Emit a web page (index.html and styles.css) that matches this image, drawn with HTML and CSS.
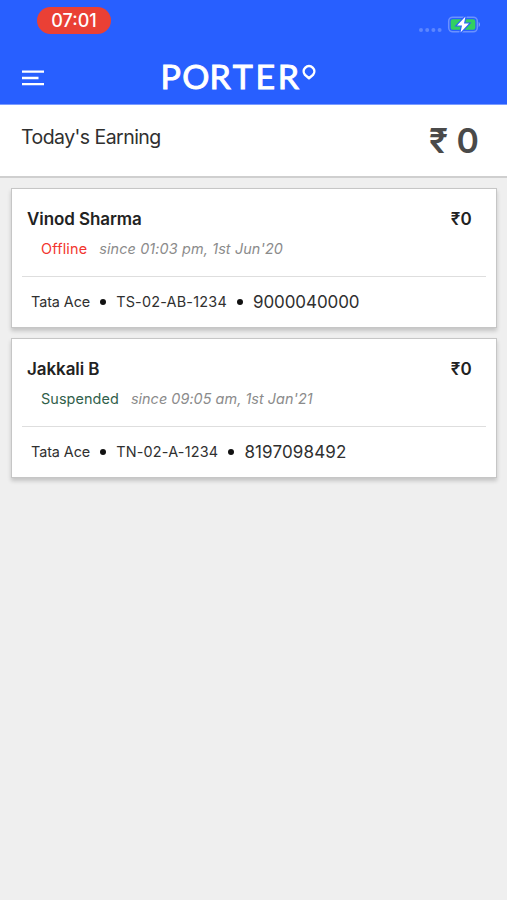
FILE: index.html
```html
<!DOCTYPE html>
<html lang="en">
<head>
<meta charset="utf-8">
<title>Porter</title>
<link rel="stylesheet" href="styles.css">
</head>
<body>
<header class="header">
  <div class="status-bar">
    <span class="clock">07:01</span>
    <svg class="device-status" width="64" height="20" viewBox="0 0 64 20">
      <g fill="#5c86ff">
        <circle cx="3" cy="14" r="2"/><circle cx="9.200" cy="14" r="2"/><circle cx="15.400" cy="14" r="2"/><circle cx="21.600" cy="14" r="2"/>
      </g>
      <rect x="30.700" y="1.200" width="28.600" height="14.600" rx="4" fill="none" stroke="#6b91ff" stroke-width="1.500"/>
      <path d="M60.700 6c1.700.8 1.700 4.200 0 5z" fill="#7d9eff"/>
      <rect x="32.700" y="3.200" width="24.600" height="10.600" rx="2" fill="#32cf62"/>
      <path d="M47.500 .5L39 9.500h5l-1.500 7L51 7.500h-5z" fill="#fff" stroke="#285fff" stroke-width="2.200" paint-order="stroke"/>
    </svg>
  </div>
  <nav class="toolbar">
    <svg class="menu" width="22" height="17" viewBox="0 0 22 17">
      <path d="M0 1.700h22M0 8h16.500M0 14.200h22" stroke="#fff" stroke-width="2.300"/>
    </svg>
    <svg class="brand" width="156" height="30" viewBox="0 0 156 30">
      <text class="wordmark" transform="scale(1.06 1)" x="-1.500 19.100 44.900 66.700 88.300 109.300" y="26.100">PORTER</text>
      <path d="M147 15.300L143 11.900A5.300 5.300 0 1 1 151 11.900Z" fill="none" stroke="#fff" stroke-width="2.500" stroke-linejoin="round"/>
    </svg>
  </nav>
</header>
<section class="earning">
  <h1 class="earning-label">Today's Earning</h1>
  <strong class="earning-total">₹ 0</strong>
</section>
<main class="drivers">
  <article class="card">
    <div class="card-head"><h2 class="name">Vinod Sharma</h2><span class="amount">₹0</span></div>
    <p class="state"><span class="offline">Offline</span><em class="since june">since 01:03 pm, 1st Jun'20</em></p>
    <div class="vehicle"><span>Tata Ace</span><i class="dot"></i><span class="plate">TS-02-AB-1234</span><i class="dot"></i><span class="phone">9000040000</span></div>
  </article>
  <article class="card">
    <div class="card-head"><h2 class="name">Jakkali B</h2><span class="amount">₹0</span></div>
    <p class="state"><span class="suspended">Suspended</span><em class="since">since 09:05 am, 1st Jan'21</em></p>
    <div class="vehicle"><span>Tata Ace</span><i class="dot"></i><span class="plate">TN-02-A-1234</span><i class="dot"></i><span class="phone phone-wide">8197098492</span></div>
  </article>
</main>
</body>
</html>
```
FILE: styles.css
```css
* { box-sizing: border-box; }
body { margin: 0; min-height: 900px; background: #efefef; color: #303030; font-family: Inter, "Liberation Sans", sans-serif; }
h1, h2, p { margin: 0; font-weight: 400; }
.header { height: 105px; background: #285fff; border-bottom: 1px solid #7b9cff; }
.status-bar { display: flex; justify-content: space-between; height: 56px; padding: 7px 25px 0 37px; }
.clock { width: 74px; height: 27px; border-radius: 13.5px; background: #ea4035; color: #fff; font-size: 18px; line-height: 27px; text-align: center; font-weight: 500; }
.device-status { margin-top: 9px; }
.toolbar { display: flex; align-items: flex-start; padding: 7px 0 0 22px; }
.menu { margin-top: 7px; }
.brand { margin-left: 118px; overflow: visible; }
.wordmark { font-family: Lato, sans-serif; font-weight: 400; font-size: 32px; fill: #fff; stroke: #fff; stroke-width: .9px; }
.earning { display: flex; justify-content: space-between; height: 73px; padding: 20px 28px 0 21px; background: #fff; border-bottom: 2px solid #cfcfcf; }
.earning-label { font-size: 19.5px; line-height: 25px; letter-spacing: -.55px; }
.earning-total { color: #4a4a4a; font-size: 34px; line-height: 32px; font-weight: 600; }
.drivers { display: flex; flex-direction: column; gap: 10px; padding: 10px 10px 0 11px; }
.card { height: 140px; padding: 0 10px; background: #fff; border: 1px solid #c6c6c6; box-shadow: 0 3px 4px rgba(0,0,0,.18); }
.card-head { display: flex; justify-content: space-between; padding: 18px 14px 0 5px; color: #222; font-size: 17px; line-height: 24px; }
.name { font-size: 17px; font-weight: 600; letter-spacing: -.08px; }
.amount { font-weight: 600; letter-spacing: .3px; }
.state { display: flex; gap: 12px; height: 45px; padding: 8px 0 0 19px; font-size: 14.4px; line-height: 20px; letter-spacing: .09px; }
.offline { color: #f2352e; letter-spacing: .18px; }
.suspended { color: #315f4b; }
.since { color: #8b8b8b; letter-spacing: .05px; }
.june { letter-spacing: .13px; }
.vehicle { display: flex; align-items: center; height: 50px; padding-left: 9px; border-top: 1px solid #dedede; font-size: 14.4px; letter-spacing: -.08px; }
.dot { width: 6px; height: 6px; margin: 0 10px; border-radius: 50%; background: #111; }
.plate { letter-spacing: .22px; }
.phone { font-size: 17px; letter-spacing: -.07px; }
.phone-wide { letter-spacing: .15px; }
```
